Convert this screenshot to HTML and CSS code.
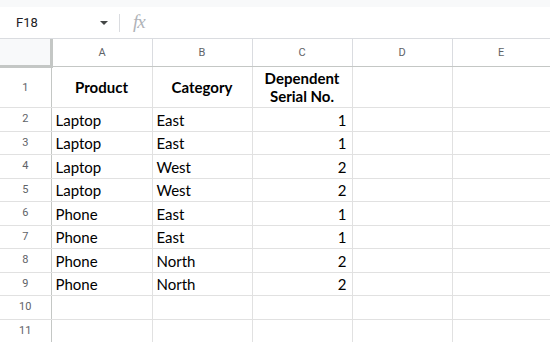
FILE: index.html
```html
<!DOCTYPE html>
<html lang="en">
  <head>
    <meta charset="UTF-8" />
    <meta name="viewport" content="width=device-width, initial-scale=1.0" />
    <title>Sheet</title>
    <link rel="stylesheet" href="styles.css">
  </head>
  <body>
    <div class="topstrip"></div>
    <div class="formula-bar">
      <div class="namebox">F18</div>
      <div class="caret"></div>
      <div class="sep"></div>
      <div class="fx">fx</div>
    </div>
    <table class="sheet">
      <colgroup>
        <col class="c-row">
        <col class="c-a">
        <col class="c-std">
        <col class="c-std">
        <col class="c-std">
        <col class="c-e">
      </colgroup>
      <tr class="colhead">
        <th class="corner"></th>
        <th>A</th>
        <th>B</th>
        <th>C</th>
        <th>D</th>
        <th>E</th>
      </tr>
      <tr class="first">
        <td class="rownum">1</td>
        <td class="hdr">Product</td>
        <td class="hdr">Category</td>
        <td class="hdr">Dependent<br>Serial No.</td>
        <td></td>
        <td></td>
      </tr>
      <tr>
        <td class="rownum">2</td>
        <td>Laptop</td>
        <td>East</td>
        <td class="num">1</td>
        <td></td>
        <td></td>
      </tr>
      <tr>
        <td class="rownum">3</td>
        <td>Laptop</td>
        <td>East</td>
        <td class="num">1</td>
        <td></td>
        <td></td>
      </tr>
      <tr>
        <td class="rownum">4</td>
        <td>Laptop</td>
        <td>West</td>
        <td class="num">2</td>
        <td></td>
        <td></td>
      </tr>
      <tr>
        <td class="rownum">5</td>
        <td>Laptop</td>
        <td>West</td>
        <td class="num">2</td>
        <td></td>
        <td></td>
      </tr>
      <tr>
        <td class="rownum">6</td>
        <td>Phone</td>
        <td>East</td>
        <td class="num">1</td>
        <td></td>
        <td></td>
      </tr>
      <tr>
        <td class="rownum">7</td>
        <td>Phone</td>
        <td>East</td>
        <td class="num">1</td>
        <td></td>
        <td></td>
      </tr>
      <tr>
        <td class="rownum">8</td>
        <td>Phone</td>
        <td>North</td>
        <td class="num">2</td>
        <td></td>
        <td></td>
      </tr>
      <tr>
        <td class="rownum">9</td>
        <td>Phone</td>
        <td>North</td>
        <td class="num">2</td>
        <td></td>
        <td></td>
      </tr>
      <tr>
        <td class="rownum">10</td>
        <td></td>
        <td></td>
        <td></td>
        <td></td>
        <td></td>
      </tr>
      <tr>
        <td class="rownum">11</td>
        <td></td>
        <td></td>
        <td></td>
        <td></td>
        <td></td>
      </tr>
    </table>
  </body>
</html>
```

FILE: styles.css
```css
body {
  margin: 0;
  width: 550px;
  height: 342px;
  overflow: hidden;
  background: white;
  font-family: "Lato", sans-serif;
}

.topstrip {
  height: 7px;
  background-color: #f8f9fa;
}

.formula-bar {
  height: 31px;
  display: flex;
  align-items: center;
  border-bottom: 1px solid #dadce0;
  font-family: "Roboto", Arial, sans-serif;
}

.namebox {
  width: 84px;
  padding-left: 16px;
  font-size: 13px;
  color: #202124;
}

.caret {
  width: 0;
  height: 0;
  border-left: 4px solid transparent;
  border-right: 4px solid transparent;
  border-top: 4px solid #444746;
  margin-top: 1px;
}

.sep {
  width: 1px;
  height: 18px;
  background-color: #dadce0;
  margin-left: 11px;
  margin-right: 13px;
}

.fx {
  font-family: "Liberation Serif", serif;
  font-style: italic;
  font-size: 19px;
  color: #b0b3b8;
  letter-spacing: -1px;
  margin-top: -2px;
}

.sheet {
  border-collapse: collapse;
  table-layout: fixed;
  width: 550px;
}

.c-row { width: 51px; }
.c-a { width: 101px; }
.c-std { width: 100px; }
.c-e { width: 98px; }

.sheet th,
.sheet td {
  border-right: 1px solid #e1e1e1;
  border-bottom: 1px solid #e1e1e1;
  padding: 0 4px;
  white-space: nowrap;
  overflow: hidden;
}

.sheet th:last-child,
.sheet td:last-child {
  border-right: none;
}

.colhead th {
  height: 26px;
  font-family: "Roboto", Arial, sans-serif;
  font-weight: normal;
  font-size: 11px;
  color: #5f6368;
  text-align: center;
  border-bottom: 1px solid #c4c7c5;
  border-right: 1px solid #dadce0;
}

.sheet .corner {
  background-color: #f8f9fa;
  border-right: 3px solid #c4c7c5;
  border-bottom: 3px solid #c4c7c5;
  padding: 0;
}

.sheet tr {
  height: 23.5px;
}

.sheet tr.colhead {
  height: 27px;
}

.sheet tr.first {
  height: 41px;
}

.sheet td {
  font-size: 15px;
  color: #000;
  vertical-align: bottom;
  padding-bottom: 1px;
  line-height: 20px;
}

.sheet td.rownum {
  font-family: "Roboto", Arial, sans-serif;
  font-size: 11px;
  color: #5f6368;
  text-align: center;
  vertical-align: middle;
  padding: 0;
  border-right: 1px solid #c4c7c5;
}

.sheet td.hdr {
  font-weight: bold;
  text-align: center;
  vertical-align: middle;
  line-height: 18px;
}

.sheet td.num {
  text-align: right;
  padding-right: 5px;
}
```
